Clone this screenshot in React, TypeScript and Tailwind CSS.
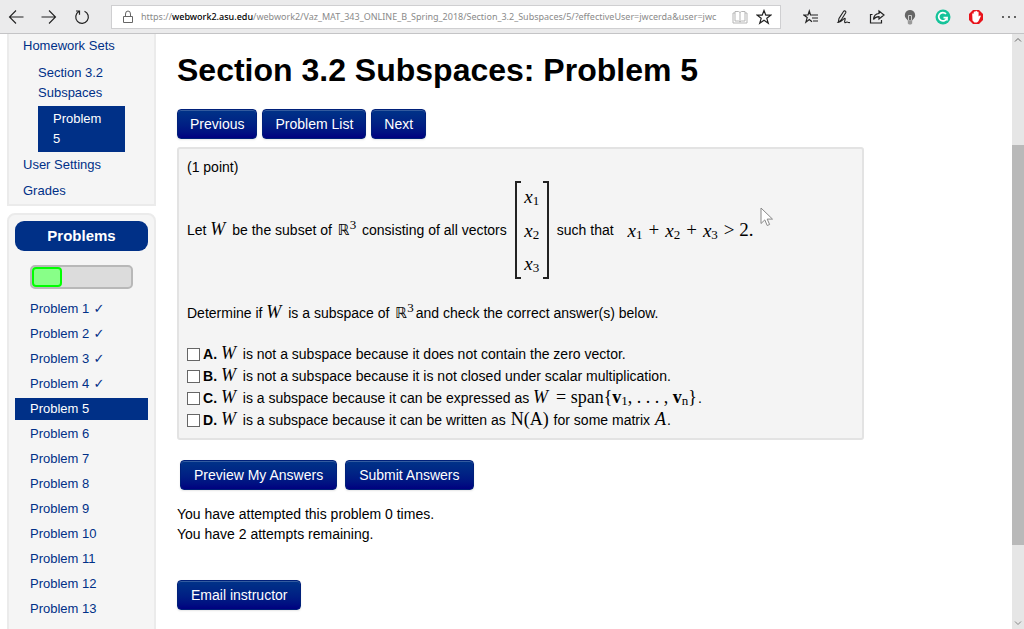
import type { ReactNode } from "react";

const problems = Array.from({ length: 14 }, (_, i) => i + 1);
const CURRENT = 5;

const answers: { id: string; body: ReactNode }[] = [
  { id: "A", body: <><W /> is not a subspace because it does not contain the zero vector.</> },
  { id: "B", body: <><W /> is not a subspace because it is not closed under scalar multiplication.</> },
  {
    id: "C",
    body: (
      <>
        <W /> is a subspace because it can be expressed as <W />{" "}
        <MathText>
          = span{"{"}<b>v</b><Sub>1</Sub>, . . . , <b>v</b><Sub>n</Sub>{"}"}
        </MathText>
        .
      </>
    ),
  },
  {
    id: "D",
    body: (
      <>
        <W /> is a subspace because it can be written as <MathText>N(A)</MathText> for some matrix{" "}
        <MathText><i>A</i></MathText>.
      </>
    ),
  },
];

function MathText({ children }: { children: ReactNode }) {
  return <span className="mx-px font-['Liberation_Serif',serif] text-[18px] leading-none">{children}</span>;
}

function W() {
  return <span className="mr-[3px] font-['Liberation_Serif',serif] text-[18px] leading-none italic">W</span>;
}

function Sub({ children }: { children: ReactNode }) {
  return <sub className="-bottom-0.5 text-[13px] leading-none not-italic">{children}</sub>;
}

function X({ n }: { n: number }) {
  return (
    <span className="font-['Liberation_Serif',serif] text-[19px] leading-none">
      <i>x</i>
      <Sub>{n}</Sub>
    </span>
  );
}

function R3() {
  return (
    <span className="mx-0.5 font-['DejaVu_Sans',sans-serif] text-[15px] leading-none">
      ℝ<sup className="-top-1.5 font-['Liberation_Serif',serif] text-[13px] leading-none">3</sup>
    </span>
  );
}

function NavyButton({ wide, children }: { wide?: boolean; children: ReactNode }) {
  return (
    <button
      type="button"
      className={`${wide ? "px-[13px]" : "px-3"} h-[30px] rounded-[4px] border border-[#00207a] bg-linear-to-b from-[#003388] to-[#000080] text-sm leading-5 text-white shadow-[inset_0_1px_0_rgba(255,255,255,0.2),0_1px_2px_rgba(0,0,0,0.1)]`}
    >
      {children}
    </button>
  );
}

function ToolButton({ label, children }: { label: string; children: ReactNode }) {
  return (
    <button type="button" aria-label={label} className="flex h-6 w-4 shrink-0 items-center justify-center">
      {children}
    </button>
  );
}

const STAR = "M8 1.5 9.8 6.2H14.8L10.8 9.3 12.3 14.3 8 11.3 3.7 14.3 5.2 9.3 1.2 6.2H6.2Z";

function BrowserBar() {
  return (
    <header className="flex h-[34px] shrink-0 items-center border-b border-[#c4c4c6] bg-[#ebebec] pr-[7px] pl-2 text-[#222]">
      <nav className="flex gap-[17px]">
        <ToolButton label="Back">
          <svg className="size-4" viewBox="0 0 16 16" fill="none" stroke="currentColor" strokeWidth="1.1">
            <path d="M15.5 8H1.5M8 1.5 1.5 8 8 14.5" />
          </svg>
        </ToolButton>
        <ToolButton label="Forward">
          <svg className="size-4" viewBox="0 0 16 16" fill="none" stroke="currentColor" strokeWidth="1.1">
            <path d="M.5 8h14M8 1.5 14.5 8 8 14.5" />
          </svg>
        </ToolButton>
        <ToolButton label="Refresh">
          <svg className="size-4" viewBox="0 0 16 16" fill="none" stroke="currentColor" strokeWidth="1.2">
            <path d="M10.500 2.200A6.300 6.300 0 1 1 4.800 2.600M2 2h3.500v3.800" />
          </svg>
        </ToolButton>
      </nav>
      <div className="ml-[21px] flex h-6 min-w-0 flex-1 items-center border border-[#cfcfd1] bg-white px-2 font-['Noto_Sans',sans-serif] text-[9px] text-[#8a8a8a]">
        <svg className="mx-0.5 h-4 w-3 shrink-0" viewBox="0 0 12 16" fill="none" stroke="#666">
          <path d="M1.5 7.5h9v6h-9zM3.5 7.500V5a2.500 3 0 0 1 5 0v2.500" />
        </svg>
        <label htmlFor="address" className="ml-[5px] shrink-0">
          https://<span className="font-medium text-black">webwork2.asu.edu</span>
        </label>
        <input
          id="address"
          className="min-w-0 flex-1 bg-transparent outline-none"
          defaultValue="/webwork2/Vaz_MAT_343_ONLINE_B_Spring_2018/Section_3.2_Subspaces/5/?effectiveUser=jwcerda&user=jwc"
        />
        <div className="flex gap-2">
          <ToolButton label="Reading view">
            <svg className="size-4" viewBox="0 0 16 16" fill="none" stroke="#b5b5b5">
              <path d="M8 3.500 6.500 2.500H3v9.500h3.500L8 13l1.500-1h3.500V2.500H9.500ZM8 3.500V13M3 4H1v10h14V4h-2" />
            </svg>
          </ToolButton>
          <ToolButton label="Add to favorites">
            <svg className="size-4" viewBox="0 0 16 16" fill="none" stroke="#222" strokeWidth="1.2">
              <path d={STAR} />
            </svg>
          </ToolButton>
        </div>
      </div>
      <div className="ml-[22px] flex gap-[17px]">
        <ToolButton label="Hub">
          <svg className="size-4" viewBox="0 0 16 16" fill="none" stroke="currentColor" strokeWidth="1.2">
            <path d="M10 6H7.500L6.300 2 5 6H.8L4.200 8.600 2.900 13.200 6.300 10.500 9 12.700M8.500 6H15M9 9h6M10 12h5" />
          </svg>
        </ToolButton>
        <ToolButton label="Make a web note">
          <svg className="size-4" viewBox="0 0 16 16" fill="none" stroke="currentColor" strokeWidth="1.1">
            <path d="M2.200 13.500 3 9.500 7.500 2.500c.8-1.300 3-.2 2.200 1.200L5.200 11 2.200 13.500c3 0 5.300-4.300 6.600-4.100 1.200.2-1 3.300 0 4.100.9.700 1.900-.9 2.700-.4.800.5 1.200.7 2.500.4" />
          </svg>
        </ToolButton>
        <ToolButton label="Share">
          <svg className="size-4" viewBox="0 0 16 16" fill="none" stroke="currentColor" strokeWidth="1.200">
            <path d="M3.500 5.500H1.500v8.500h11v-3M10 2l5 4-5 4V7.700C7.500 7.700 5.800 8.500 4.500 10.500 4.800 7 6.500 4.700 10 4.500Z" />
          </svg>
        </ToolButton>
        <ToolButton label="Turn off the lights">
          <svg className="size-4" viewBox="0 0 16 16">
            <path fill="#666" d="M8 1a5.200 5.200 0 0 0-3 9.400l.7 1.100h4.600l.7-1.100A5.200 5.200 0 0 0 8 1Z" />
            <path fill="none" stroke="#ccc" d="M6.500 11V6.500h3V11" />
            <path fill="#999" d="M5.800 12h4.400v2.500L9 15.500H7l-1.200-1Z" />
          </svg>
        </ToolButton>
        <ToolButton label="Grammarly">
          <svg className="size-4" viewBox="0 0 16 16" fill="none">
            <circle cx="8" cy="8" r="7.500" fill="#15c39a" />
            <path stroke="#fff" strokeWidth="1.700" d="M11 4.900A4.200 4.200 0 1 0 12 8.700H8.500M12 8.400v3" />
          </svg>
        </ToolButton>
        <ToolButton label="AdBlock">
          <svg className="size-4" viewBox="0 0 16 16">
            <path fill="#e8131b" d="M5 1h6l4 4v6l-4 4H5l-4-4V5Z" />
            <path fill="#fff" d="M4.200 5.200c0-1.200 1.500-1.200 1.500 0V3.500c0-1.200 1.600-1.200 1.600 0v-.9c0-1.200 1.700-1.200 1.700 0v.9c0-1.200 1.600-1.200 1.600 0v4l.8-.8c1-.7 1.800.1 1.200 1l-2.200 4.600-1.400 1.200H6.400L4.500 11.500Z" />
          </svg>
        </ToolButton>
        <ToolButton label="More">
          <svg className="size-4" viewBox="0 0 16 16" fill="currentColor">
            <circle cx="2" cy="8" r=".9" /><circle cx="8" cy="8" r=".9" /><circle cx="14" cy="8" r=".9" />
          </svg>
        </ToolButton>
      </div>
    </header>
  );
}

function Sidebar() {
  return (
    <aside className="flex w-[149px] shrink-0 flex-col gap-[7px] text-[13px] leading-5 text-[#003087]">
      <nav className="border-x-2 border-b-2 border-[#ebebeb] bg-[#f5f5f5] px-[14px]">
        <a href="#sets" className="block pt-0.5 pb-1">Homework Sets</a>
        <div className="mx-[15px]">
          <a href="#section" className="block py-[3px]">Section 3.2 Subspaces</a>
          <a href="#p5" className="block bg-[#003087] py-[3px] pr-6 pl-[15px] text-white">Problem 5</a>
        </div>
        <a href="#settings" className="block py-[3px]">User Settings</a>
        <a href="#grades" className="block py-[3px]">Grades</a>
      </nav>
      <nav className="rounded-t-lg border-2 border-[#ebebeb] bg-[#f5f5f5] px-1.5 pt-1.5">
        <h2 className="rounded-[9px] bg-[#003087] py-[5px] text-center text-[15px] font-bold text-white">Problems</h2>
        <div className="mx-[15px] mt-3.5 mb-[9px] h-6 rounded-[5px] border-2 border-[#b8b8b8] bg-[#dcdcdc]">
          <div className="h-5 w-[30%] rounded-[4px] border-2 border-[#00ff00] bg-[#88ff88]" />
        </div>
        <ul className="flex flex-col gap-[3px]">
          {problems.map((n) => (
            <li key={n}>
              <a
                href={`#problem-${n}`}
                className={n === CURRENT ? "block bg-[#003087] px-[15px] py-px text-white" : "block px-[15px] py-px"}
              >
                Problem {n}
                {n < CURRENT && <span className="font-['DejaVu_Sans',sans-serif]"> ✓</span>}
              </a>
            </li>
          ))}
        </ul>
      </nav>
    </aside>
  );
}

function Matrix() {
  return (
    <span className="mx-2 flex h-[98px] w-[34px] shrink-0 justify-between">
      <span className="w-1.5 border-y-2 border-l-2 border-[#222]" />
      <span className="flex flex-col justify-between py-1.5">
        <X n={1} />
        <X n={2} />
        <X n={3} />
      </span>
      <span className="w-1.5 border-y-2 border-r-2 border-[#222]" />
    </span>
  );
}

function Scrollbar() {
  return (
    <div className="flex w-3 shrink-0 flex-col items-center justify-between bg-[#e6e6e6] py-0.5">
      <svg className="h-2 w-2" viewBox="0 0 8 8" fill="none" stroke="#666"><path d="M1 5.500 4 2.500l3 3" /></svg>
      <div className="flex w-full flex-1 flex-col">
        <div className="grow-[101]" />
        <div className="grow-[400] bg-[#b9b9b9]" />
        <div className="grow-[74]" />
      </div>
      <svg className="h-2 w-2" viewBox="0 0 8 8" fill="none" stroke="#888"><path d="M1 2.500 4 5.500l3-3" /></svg>
    </div>
  );
}

export default function App() {
  return (
    <div className="flex h-screen flex-col overflow-hidden bg-white font-['Liberation_Sans',Arial,sans-serif] text-sm leading-5 text-black">
      <BrowserBar />
      <div className="flex min-h-0 flex-1">
        <div className="flex min-w-0 flex-1 overflow-hidden pl-[7px]">
          <Sidebar />
          <main className="ml-[21px] min-w-0 flex-1 pr-[148px]">
            <h1 className="mt-4 text-[32px] leading-10 font-bold whitespace-nowrap">Section 3.2 Subspaces: Problem 5</h1>
            <div className="mt-[19px] flex gap-[5px]">
              <NavyButton>Previous</NavyButton>
              <NavyButton>Problem List</NavyButton>
              <NavyButton>Next</NavyButton>
            </div>

            <section className="relative mt-2 rounded-[3px] border-2 border-[#e3e3e3] bg-[#f4f4f4] px-2 pt-2 pb-[7px]">
              <p>(1 point)</p>
              <div className="mt-1 flex items-center whitespace-nowrap">
                <span>Let <W /> be the subset of <R3 /> consisting of all vectors</span>
                <Matrix />
                <span>such that</span>
                <span className="ml-3.5 flex items-center gap-1.5 font-['Liberation_Serif',serif] text-[19px]">
                  <X n={1} /> + <X n={2} /> + <X n={3} /> &gt; 2.
                </span>
              </div>
              <p className="mt-6">
                Determine if <W /> is a subspace of <R3 />and check the correct answer(s) below.
              </p>
              <div className="mt-5">
                {answers.map((a) => (
                  <label key={a.id} className="flex h-[22px] items-center gap-[3px] whitespace-nowrap">
                    <input type="checkbox" className="size-[13px] shrink-0 appearance-none border border-[#666] bg-white" />
                    <span><b>{a.id}.</b> {a.body}</span>
                  </label>
                ))}
              </div>
              <svg className="absolute top-[58px] right-[88px] h-5 w-3.5" viewBox="0 0 14 20" fill="#fff" stroke="#888">
                <path d="M1 1v15.500l3.800-3.600 2.400 5.600 2.400-1-2.400-5.400h5.300Z" />
              </svg>
            </section>

            <div className="mt-5 flex gap-2 pl-[3px]">
              <NavyButton wide>Preview My Answers</NavyButton>
              <NavyButton wide>Submit Answers</NavyButton>
            </div>
            <p className="mt-3.5">You have attempted this problem 0 times.</p>
            <p className="mb-9">You have 2 attempts remaining.</p>
            <NavyButton wide>Email instructor</NavyButton>
          </main>
        </div>
        <Scrollbar />
      </div>
    </div>
  );
}
